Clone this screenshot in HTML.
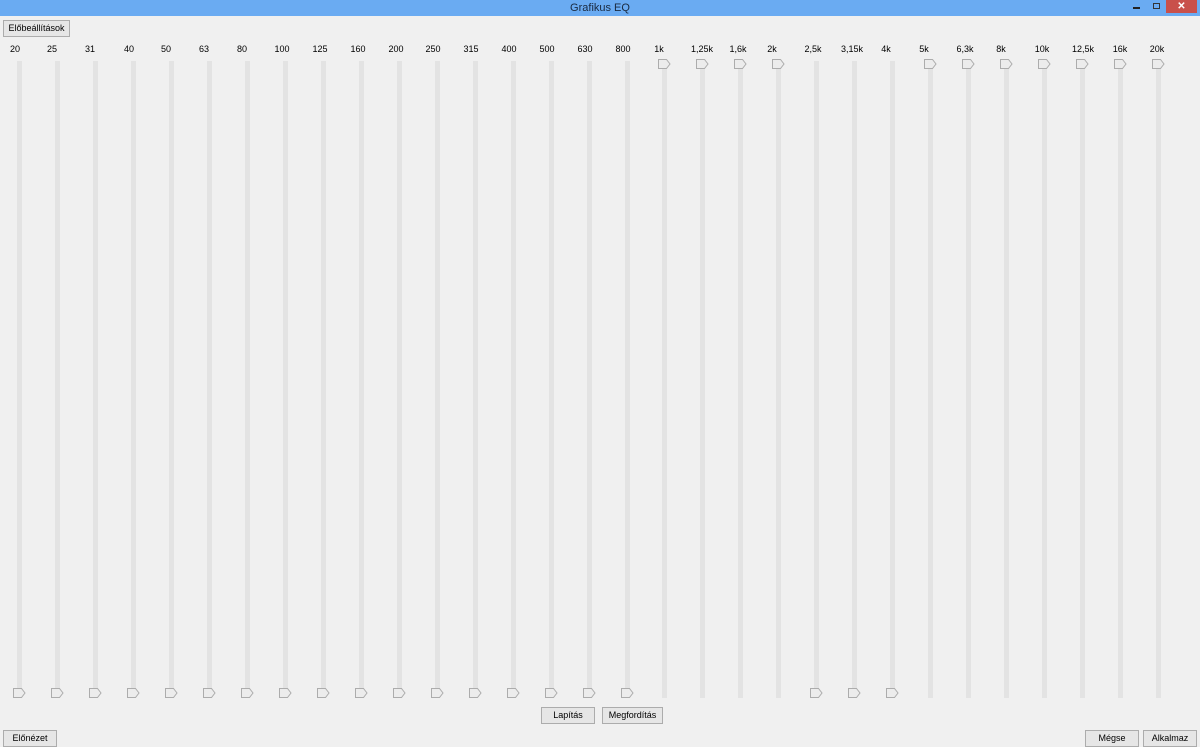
<!DOCTYPE html>
<html><head><meta charset="utf-8"><style>
*{margin:0;padding:0;box-sizing:border-box}
body{width:1200px;height:746px;background:#f0f0f0;font-family:"Liberation Sans",sans-serif;font-size:9px;color:#000;position:relative;overflow:hidden}
.title{position:absolute;left:0;top:0;width:1200px;height:16px;background:#6aabf2;text-align:center;font-size:11px;line-height:16px;color:#1a2a40}
.close{position:absolute;left:1166px;top:0;width:31px;height:13px;background:#c9504b;color:#fff;text-align:center;font-size:10px;line-height:13px;font-weight:bold}
.min{position:absolute;left:1133px;top:7px;width:7px;height:2px;background:#222}
.max{position:absolute;left:1153px;top:3px;width:7px;height:6px;border:1.5px solid #333}
.btn{position:absolute;background:#e6e6e6;border:1px solid #acacac;text-align:center;font-size:9px;line-height:15px}
.track{position:absolute;top:61px;width:5px;height:637px;background:#e3e3e3}
.lbl{position:absolute;top:44px;width:40px;text-align:center;font-size:9px;line-height:11px}
svg.th{position:absolute;width:13px;height:10px}
</style></head><body>
<div class="title">Grafikus EQ</div>
<div class="min"></div><div class="max"></div>
<div class="close">✕</div>
<div class="btn" style="left:3px;top:20px;width:67px;height:17px">Előbeállítások</div>
<div id="s"></div>
<div class="btn" style="left:541px;top:707px;width:54px;height:17px">Lapítás</div>
<div class="btn" style="left:602px;top:707px;width:61px;height:17px">Megfordítás</div>
<div class="btn" style="left:3px;top:730px;width:54px;height:17px">Előnézet</div>
<div class="btn" style="left:1085px;top:730px;width:54px;height:17px">Mégse</div>
<div class="btn" style="left:1143px;top:730px;width:54px;height:17px">Alkalmaz</div>
<script>
(function(){
var L=["20","25","31","40","50","63","80","100","125","160","200","250","315","400","500","630","800","1k","1,25k","1,6k","2k","2,5k","3,15k","4k","5k","6,3k","8k","10k","12,5k","16k","20k"];
var C=[15,52,90,129,166,204,242,282,320,358,396,433,471,509,547,585,623,659,702,738,772,813,852,886,924,965,1001,1042,1083,1120,1157];
var T=[17,18,19,20,24,25,26,27,28,29,30];
var h="";
for(var i=0;i<31;i++){var x=Math.round(19+i*37.97);
h+='<div class="lbl" style="left:'+(C[i]-20)+'px">'+L[i]+'</div>';
h+='<div class="track" style="left:'+(x-2)+'px"></div>';
var y=T.indexOf(i)>=0?59:688;
h+='<svg class="th" style="left:'+(x-6)+'px;top:'+y+'px" viewBox="0 0 13 10"><path d="M0.5 0.5H8.5L12 5L8.5 9.5H0.5Z" fill="#ececec" stroke="#acacac"/></svg>';}
document.getElementById("s").innerHTML=h;
})();
</script>
</body></html>
